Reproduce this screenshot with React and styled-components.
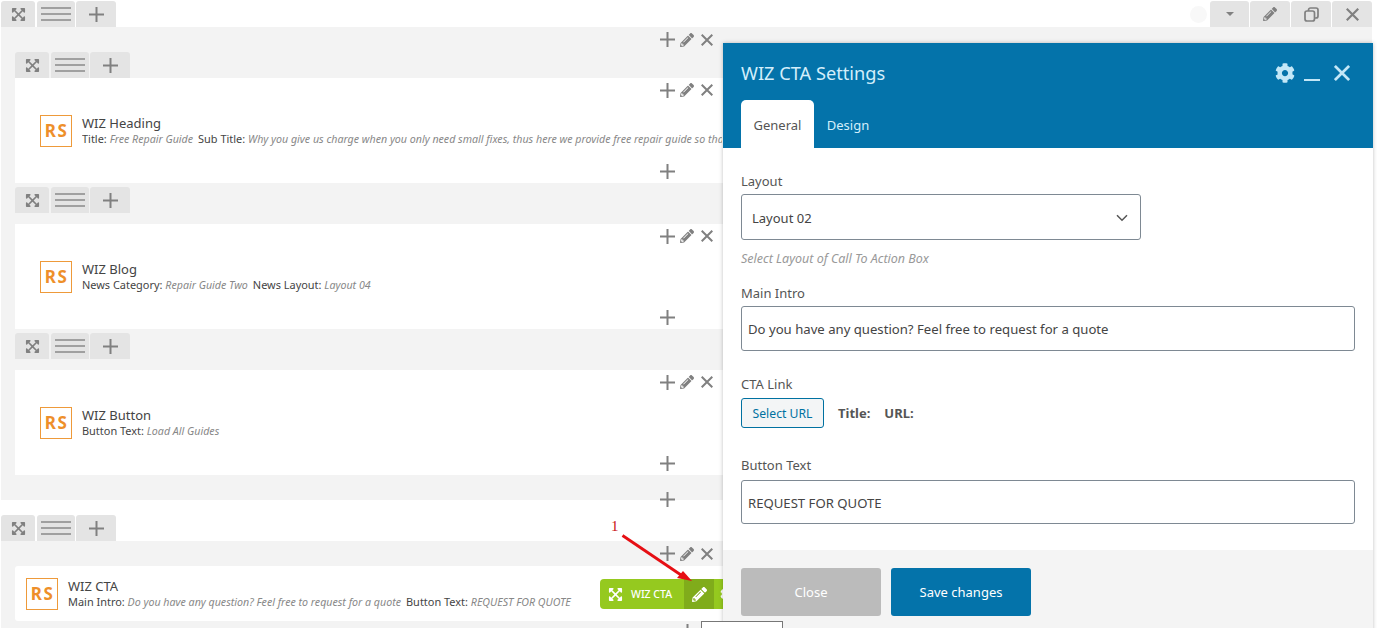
import styled, { createGlobalStyle } from 'styled-components'
import { FaExpandArrowsAlt, FaPencilAlt, FaCog } from 'react-icons/fa'

const GlobalStyle = createGlobalStyle`
  html, body {
    margin: 0;
    padding: 0;
    background: #fff;
    overflow: hidden;
  }
  * { box-sizing: border-box; }
  body {
    font-family: "Noto Sans", "Open Sans", sans-serif;
    color: #444;
  }
`

const Page = styled.div`
  position: relative;
  width: 1377px;
  height: 628px;
  overflow: hidden;
  padding-top: 1px;
`

const SectionBar = styled.div`
  display: flex;
  justify-content: space-between;
  align-items: stretch;
  height: 26px;
  width: 1371px;
  margin-left: 1px;
`

const TabGroup = styled.div`
  display: flex;
  height: 26px;
  gap: 1px;
`

const Tab = styled.div`
  display: flex;
  align-items: center;
  justify-content: center;
  width: ${p => p.$w || 40}px;
  height: 26px;
  margin-right: ${p => p.$mr || 0}px;
  background: #e4e4e4;
  border-radius: 3px 3px 0 0;
  color: #808080;
`

const ToolGroup = styled.div`
  display: flex;
  align-items: center;
  gap: 1px;
`

const Dot = styled.span`
  width: 17px;
  height: 17px;
  margin-right: 2px;
  border-radius: 50%;
  background: #f8f8f8;
`

const SectionBody = styled.div`
  width: 1371px;
  margin-left: 1px;
  padding-left: 14px;
  background: #f3f3f3;
`

const Spacer = styled.div`
  height: 15px;
`

const RowHead = styled.div`
  display: flex;
  align-items: center;
  height: 25px;
`

const SectionFoot = styled.div`
  display: flex;
  align-items: flex-end;
  height: 25px;
`

const FootAdd = styled.div`
  margin-bottom: -9px;
`

const RowTabs = styled.div`
  padding-top: ${p => p.$top || 0}px;
  padding-bottom: ${p => p.$bottom || 0}px;
`

const Actions = styled.div`
  display: flex;
  align-items: center;
  margin-left: ${p => p.$left ?? 642}px;
  color: #808080;
`

const ActionIcon = styled.span`
  display: flex;
  align-items: center;
  justify-content: center;
  width: 20px;
  height: 20px;
  flex: none;
`

const Card = styled.div`
  display: grid;
  grid-template-rows: 24px 57px 24px;
  height: 105px;
  margin-right: 12px;
  background: #fff;
`

const CardMain = styled.div`
  display: flex;
  align-items: center;
  max-width: 707px;
  padding-left: 25px;
  gap: 10px;
  min-width: 0;
  overflow: hidden;
`

const Badge = styled.div`
  display: flex;
  align-items: center;
  justify-content: center;
  flex: none;
  width: 32px;
  height: 32px;
  border: 1px solid #ee9a3a;
  background: #fff;
  color: #ee8f2a;
  font-size: 17px;
  font-weight: 700;
  letter-spacing: 1.5px;
  padding-left: 1px;
`

const CardText = styled.div`
  min-width: 0;
  white-space: nowrap;
  padding-top: 1px;
`

const ElementName = styled.div`
  font-size: 13px;
  line-height: 16px;
  color: #444;
`

const Meta = styled.div`
  font-size: 10.95px;
  line-height: 16px;
  color: #444;
  overflow: hidden;
`

const MetaKey = styled.span`
  margin-right: 5px;
`

const MetaValue = styled.em`
  font-size: 10.65px;
  color: #888;
`

const CompactCard = styled.div`
  position: relative;
  display: flex;
  align-items: center;
  gap: 10px;
  height: 55px;
  margin-right: 12px;
  padding-left: 11px;
  background: #fff;
  border-radius: 3px;
`

const HoverBar = styled.div`
  position: absolute;
  left: 585px;
  top: 13px;
  display: flex;
  align-items: stretch;
  width: 140px;
  height: 30px;
  background: #95c91f;
  border-radius: 4px;
  color: #fff;
  overflow: hidden;
`

const HoverName = styled.div`
  display: flex;
  align-items: center;
  gap: 8px;
  width: 84px;
  padding-left: 8px;
  font-size: 10.5px;
  font-weight: 500;
  white-space: nowrap;
`

const HoverEdit = styled.div`
  display: flex;
  align-items: center;
  justify-content: center;
  width: 30px;
  background: #80ac1b;
`

const HoverMore = styled.div`
  display: flex;
  align-items: center;
  padding-left: 6px;
`

const Annotation = styled.svg`
  position: absolute;
  left: 600px;
  top: 515px;
  width: 110px;
  height: 80px;
  pointer-events: none;
  z-index: 3;
`

const StrayBox = styled.div`
  position: absolute;
  left: 701px;
  top: 621px;
  width: 82px;
  height: 20px;
  background: #fff;
  border: 1px solid #777;
  z-index: 3;
`

const Modal = styled.div`
  position: absolute;
  left: 723px;
  top: 43px;
  width: 650px;
  height: 600px;
  display: flex;
  flex-direction: column;
  background: #fff;
  box-shadow: 0 0 4px rgba(0, 0, 0, 0.25);
  z-index: 2;
`

const ModalHeader = styled.div`
  display: flex;
  flex-direction: column;
  justify-content: space-between;
  height: 105px;
  padding: 0 18px;
  background: #0473aa;
`

const HeaderTop = styled.div`
  display: flex;
  align-items: center;
  justify-content: space-between;
  padding-top: 17px;
  padding-right: 5px;
`

const ModalTitle = styled.h2`
  margin: 0;
  font-size: 18.2px;
  line-height: 26px;
  font-weight: 400;
  color: #d3eefb;
`

const HeaderIcons = styled.div`
  display: flex;
  align-items: center;
  color: #c3e7f7;
`

const Minimize = styled.span`
  display: block;
  width: 16px;
  height: 2px;
  margin: 14px 14px 0 9px;
  background: #c3e7f7;
`

const TabBar = styled.div`
  display: flex;
  align-items: stretch;
  height: 48px;
`

const ModalTab = styled.div`
  display: flex;
  align-items: center;
  justify-content: center;
  width: ${p => (p.$active ? 73 : 68)}px;
  padding-top: 2px;
  background: ${p => (p.$active ? '#fff' : 'transparent')};
  color: ${p => (p.$active ? '#555' : '#d3eefb')};
  border-radius: 5px 5px 0 0;
  font-size: 13px;
`

const ModalBody = styled.div`
  height: 402px;
  padding: 23px 18px 0;
`

const Label = styled.div`
  font-size: 13px;
  line-height: 20px;
  color: #555;
  margin-top: ${p => p.$top || 0}px;
  margin-bottom: ${p => p.$bottom ?? 3}px;
`

const Select = styled.div`
  display: flex;
  align-items: center;
  justify-content: space-between;
  width: 400px;
  height: 46px;
  padding: 1px 12px 0 10px;
  border: 1px solid #7e8993;
  border-radius: 3px;
  font-size: 13px;
  color: #444;
`

const Help = styled.div`
  margin-top: 10px;
  font-size: 12.5px;
  line-height: 18px;
  font-style: italic;
  color: #999;
`

const Input = styled.div`
  display: flex;
  align-items: center;
  width: 614px;
  height: ${p => p.$h || 45}px;
  padding: 1px 6px 0;
  border: 1px solid #7e8993;
  border-radius: 3px;
  font-size: 13.15px;
  color: #444;
`

const LinkRow = styled.div`
  display: flex;
  align-items: center;
  height: 30px;
`

const UrlButton = styled.div`
  display: flex;
  align-items: center;
  justify-content: center;
  width: 83px;
  height: 30px;
  margin-right: 14px;
  background: #f3f5f6;
  border: 1px solid #0071a1;
  border-radius: 3px;
  font-size: 12.2px;
  color: #0071a1;
`

const LinkField = styled.strong`
  margin-right: 14px;
  font-size: 13px;
  font-weight: 700;
  color: #555;
`

const ModalFooter = styled.div`
  display: flex;
  gap: 10px;
  flex: 1;
  padding: 18px 18px 0;
  background: #f4f4f4;
`

const FooterButton = styled.div`
  display: flex;
  align-items: center;
  justify-content: center;
  width: 140px;
  height: 48px;
  border-radius: 3px;
  background: ${p => (p.$primary ? '#0473aa' : '#bbb')};
  color: #fff;
  font-size: 13px;
`

const Plus = ({ size = 15 }) => (
  <svg width={size} height={size} viewBox="0 0 15 15" fill="none" stroke="currentColor" strokeWidth="2">
    <path d="M7.5 0v15M0 7.5h15" />
  </svg>
)

const Cross = ({ size = 12, width = 2 }) => (
  <svg width={size} height={size} viewBox="0 0 12 12" fill="none" stroke="currentColor" strokeWidth={width}>
    <path d="M.7.7l10.6 10.6M11.3.7L.7 11.3" />
  </svg>
)

const Lines = () => (
  <svg width="30" height="14" viewBox="0 0 30 14" fill="#a0a0a0">
    <rect y="0" width="30" height="2" />
    <rect y="6" width="30" height="2" />
    <rect y="12" width="30" height="2" />
  </svg>
)

const Clone = () => (
  <svg width="15" height="15" viewBox="0 0 15 15" fill="none" stroke="currentColor" strokeWidth="1.7">
    <rect x="1" y="4" width="9.5" height="10" rx="2" />
    <path d="M4.5 4V3a2 2 0 0 1 2-2H12a2 2 0 0 1 2 2v6a2 2 0 0 1-2 2h-1.5" />
  </svg>
)

const Caret = () => (
  <svg width="8" height="4" viewBox="0 0 10 5" fill="currentColor">
    <path d="M0 0h10L5 5z" />
  </svg>
)

const Chevron = () => (
  <svg width="12" height="8" viewBox="0 0 12 8" fill="none" stroke="#555" strokeWidth="1.5">
    <path d="M1 1.2l5 5 5-5" />
  </svg>
)

function LeftTabs() {
  return (
    <TabGroup>
      <Tab $w={34} $mr={1}><FaExpandArrowsAlt size={15} /></Tab>
      <Tab $w={38}><Lines /></Tab>
      <Tab $w={40}><Plus /></Tab>
    </TabGroup>
  )
}

function RowActions() {
  return (
    <Actions>
      <ActionIcon><Plus /></ActionIcon>
      <ActionIcon><FaPencilAlt size={14} /></ActionIcon>
      <ActionIcon><Cross /></ActionIcon>
    </Actions>
  )
}

function ElementCard({ name, fields }) {
  return (
    <Card>
      <RowActions />
      <CardMain>
        <Badge>RS</Badge>
        <CardText>
          <ElementName>{name}</ElementName>
          <Meta>
            {fields.map(([key, value]) => (
              <MetaKey key={key}>
                {key}: <MetaValue>{value}</MetaValue>
              </MetaKey>
            ))}
          </Meta>
        </CardText>
      </CardMain>
      <Actions><ActionIcon><Plus /></ActionIcon></Actions>
    </Card>
  )
}

export default function App() {
  return (
    <Page>
      <GlobalStyle />

      <SectionBar>
        <LeftTabs />
        <ToolGroup>
          <Dot />
          <Tab $w={39}><Caret /></Tab>
          <Tab><FaPencilAlt size={14} /></Tab>
          <Tab><Clone /></Tab>
          <Tab><Cross size={13} /></Tab>
        </ToolGroup>
      </SectionBar>
      <SectionBody>
        <RowHead><RowActions /></RowHead>
        <LeftTabs />
        <ElementCard
          name="WIZ Heading"
          fields={[
            ['Title', 'Free Repair Guide'],
            ['Sub Title', 'Why you give us charge when you only need small fixes, thus here we provide free repair guide so that'],
          ]}
        />
        <RowTabs $top={4} $bottom={11}><LeftTabs /></RowTabs>
        <ElementCard
          name="WIZ Blog"
          fields={[
            ['News Category', 'Repair Guide Two'],
            ['News Layout', 'Layout 04'],
          ]}
        />
        <RowTabs $top={4} $bottom={11}><LeftTabs /></RowTabs>
        <ElementCard name="WIZ Button" fields={[['Button Text', 'Load All Guides']]} />
        <SectionFoot>
          <FootAdd>
            <Actions><ActionIcon><Plus /></ActionIcon></Actions>
          </FootAdd>
        </SectionFoot>
      </SectionBody>

      <Spacer />

      <SectionBar>
        <LeftTabs />
      </SectionBar>
      <SectionBody>
        <RowHead><RowActions /></RowHead>
        <CompactCard>
          <Badge>RS</Badge>
          <CardText>
            <ElementName>WIZ CTA</ElementName>
            <Meta>
              <MetaKey>Main Intro: <MetaValue>Do you have any question? Feel free to request for a quote</MetaValue></MetaKey>
              <MetaKey>Button Text: <MetaValue>REQUEST FOR QUOTE</MetaValue></MetaKey>
            </Meta>
          </CardText>
          <HoverBar>
            <HoverName><FaExpandArrowsAlt size={15} />WIZ CTA</HoverName>
            <HoverEdit><FaPencilAlt size={15} /></HoverEdit>
            <HoverMore><FaCog size={14} /></HoverMore>
          </HoverBar>
        </CompactCard>
        <Actions $left={662}><ActionIcon><Plus /></ActionIcon></Actions>
      </SectionBody>

      <Modal>
        <ModalHeader>
          <HeaderTop>
            <ModalTitle>WIZ CTA Settings</ModalTitle>
            <HeaderIcons>
              <FaCog size={20} />
              <Minimize />
              <Cross size={16} />
            </HeaderIcons>
          </HeaderTop>
          <TabBar>
            <ModalTab $active>General</ModalTab>
            <ModalTab>Design</ModalTab>
          </TabBar>
        </ModalHeader>
        <ModalBody>
          <Label>Layout</Label>
          <Select>
            Layout 02
            <Chevron />
          </Select>
          <Help>Select Layout of Call To Action Box</Help>
          <Label $top={15}>Main Intro</Label>
          <Input>Do you have any question? Feel free to request for a quote</Input>
          <Label $top={23} $bottom={4}>CTA Link</Label>
          <LinkRow>
            <UrlButton>Select URL</UrlButton>
            <LinkField>Title:</LinkField>
            <LinkField>URL:</LinkField>
          </LinkRow>
          <Label $top={27} $bottom={5}>Button Text</Label>
          <Input $h={44}>REQUEST FOR QUOTE</Input>
        </ModalBody>
        <ModalFooter>
          <FooterButton>Close</FooterButton>
          <FooterButton $primary>Save changes</FooterButton>
        </ModalFooter>
      </Modal>

      <Annotation viewBox="0 0 110 80">
        <text x="11" y="16" fontFamily="Liberation Serif, serif" fontSize="15" fill="#c81414">1</text>
        <path d="M22.5 20.5L81 60" stroke="#e60f14" strokeWidth="2.8" fill="none" />
        <path d="M92 66L77 63L83 56z" fill="#e60f14" />
      </Annotation>
      <StrayBox />
    </Page>
  )
}
